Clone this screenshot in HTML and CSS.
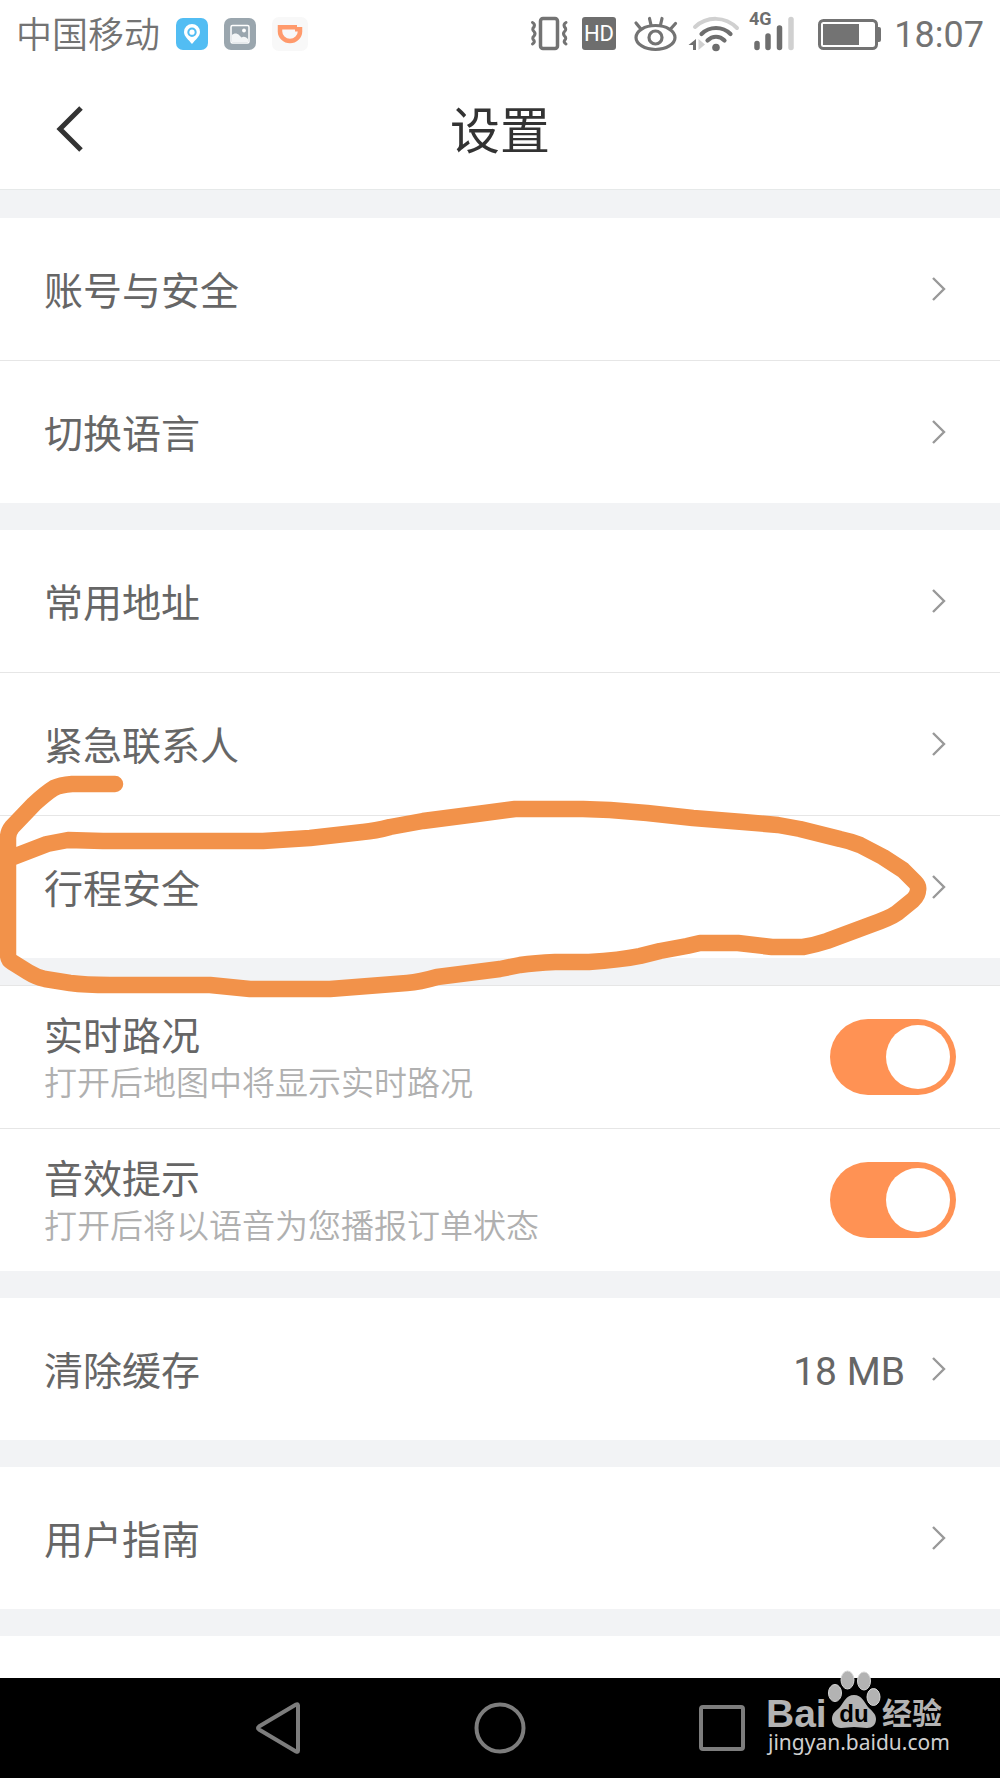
FILE: index.html
```html
<!DOCTYPE html>
<html lang="zh-CN">
<head>
<meta charset="utf-8">
<meta name="viewport" content="width=device-width, initial-scale=1">
<title>设置</title>
<link rel="stylesheet" href="styles.css">
</head>
<body>
<svg class="defs" aria-hidden="true">
  <symbol id="chevron" viewBox="0 0 16 26"><path d="M2 2 13 13 2 24" fill="none" stroke="#999" stroke-width="2.4"/></symbol>
</svg>

<div class="status">
  <span class="carrier">中国移动</span>
  <svg class="app" width="32" height="32" viewBox="0 0 32 32" aria-hidden="true">
    <rect width="32" height="32" rx="7" fill="#52bdf3"/>
    <path fill="#fff" fill-rule="evenodd" d="M16 6a8 8 0 0 1 8 8c0 4.500-4.500 7.500-8 12-3.500-4.500-8-7.500-8-12a8 8 0 0 1 8-8zm0 3.500a4.700 4.700 0 1 0 0 9.400 4.700 4.700 0 0 0 0-9.400z"/>
    <circle cx="16" cy="14.200" r="2.600" fill="#fff"/>
  </svg>
  <svg class="app" width="32" height="32" viewBox="0 0 32 32" aria-hidden="true">
    <rect width="32" height="32" rx="7" fill="#9aa6ae"/>
    <rect x="7" y="7.500" width="18" height="17.500" rx="1.500" fill="none" stroke="#fff" stroke-width="1.500"/>
    <path fill="#f3f5f6" d="M8 17c2-2 5-2 7 0l2.500 2.500c2-1.500 4-1 6.500 1.500v3H8z"/>
    <circle cx="20" cy="12.500" r="1.900" fill="#fff"/>
  </svg>
  <svg class="app" width="36" height="34" viewBox="0 0 36 34" aria-hidden="true">
    <rect width="36" height="34" rx="7" fill="#f8f8f8"/>
    <path d="M25 10.300H8V14.500c0 5 4.500 9.500 10 9.500s10-4.500 10-9.500V12.300H23" fill="none" stroke="#ff9a6c" stroke-width="4.500"/>
  </svg>
  <span class="spacer"></span>
  <svg width="44" height="44" viewBox="530 12 44 44" aria-hidden="true">
    <g fill="none" stroke="#737373" stroke-linecap="round">
      <rect x="540.500" y="18.500" width="17" height="30" rx="2.500" stroke-width="3.500"/>
      <path stroke-width="3" d="M532.500 22.500q3 1.500 1.500 4.500-2.500 2 0 4.500 2 2 0 4.500-2.500 2 0 4.500 1 2-1.500 3.500M566 22.500q-3 1.500-1.500 4.500 2.500 2 0 4.500-2 2 0 4.500 2.500 2 0 4.500-1 2 1.500 3.500"/>
    </g>
  </svg>
  <svg width="40" height="44" viewBox="582 12 40 44" aria-label="HD">
    <rect x="582" y="17" width="34" height="33" rx="3" fill="#6e6e6e"/>
    <text class="hd" x="599" y="41" text-anchor="middle">HD</text>
  </svg>
  <svg width="50" height="44" viewBox="630 12 50 44" aria-hidden="true">
    <g fill="none" stroke="#737373" stroke-width="3.200" stroke-linecap="round">
      <ellipse cx="655.500" cy="37.500" rx="19.500" ry="12"/>
      <circle cx="655.500" cy="37.500" r="6.500"/>
      <path d="M640.500 28.500 636 23M651 25l-1.500-6.500M660.500 25l1.500-6.500M671 28.500l4.500-5"/>
    </g>
  </svg>
  <svg width="52" height="44" viewBox="688 12 52 44" aria-hidden="true">
    <g fill="none" stroke-linecap="round">
      <path stroke="#d0d0d0" stroke-width="4" d="M695 27c12-11 30-11 42 1"/>
      <path stroke="#6e6e6e" stroke-width="4.200" d="M701.500 34c8-8 21-8 29 0M707.500 40.500c5-5 12-5 17 0"/>
    </g>
    <circle cx="716" cy="47.500" r="3.800" fill="#6e6e6e"/>
    <path fill="#6e6e6e" d="M696 39v11h-3v-5h-4.500z"/>
    <path fill="#d0d0d0" d="M698.500 39v11l6.500-5.500z"/>
  </svg>
  <svg width="54" height="60" viewBox="748 4 54 60" aria-label="4G">
    <text class="net" x="749" y="25">4G</text>
    <g stroke-width="5.500" stroke-linecap="round" stroke="#6e6e6e">
      <path d="M757 43.500v4M768 36v11.500M779.500 28v19.500"/>
      <path stroke="#d0d0d0" d="M791 19.500v28"/>
    </g>
  </svg>
  <svg width="76" height="44" viewBox="810 12 76 44" aria-hidden="true">
    <rect x="819.500" y="20.500" width="57" height="28" rx="4" fill="none" stroke="#737373" stroke-width="3"/>
    <rect x="823" y="24" width="36" height="21" fill="#737373"/>
    <path fill="#737373" d="M877 27h2q2 0 2 2v11q0 2-2 2h-2z"/>
  </svg>
  <time class="clock">18:07</time>
</div>

<header class="header">
  <button class="back" type="button" aria-label="返回">
    <svg width="28" height="48" viewBox="0 0 28 48" aria-hidden="true"><path d="M25 3 4 24 25 45" fill="none" stroke="#333" stroke-width="5"/></svg>
  </button>
  <h1 class="title">设置</h1>
</header>

<main class="main">
  <ul class="group">
    <li><a class="row" href="#account"><span class="label">账号与安全</span><svg class="chevron"><use href="#chevron"/></svg></a></li>
    <li><a class="row" href="#language"><span class="label">切换语言</span><svg class="chevron"><use href="#chevron"/></svg></a></li>
  </ul>

  <div class="marked">
    <ul class="group">
      <li><a class="row" href="#address"><span class="label">常用地址</span><svg class="chevron"><use href="#chevron"/></svg></a></li>
      <li><a class="row" href="#contacts"><span class="label">紧急联系人</span><svg class="chevron"><use href="#chevron"/></svg></a></li>
      <li><a class="row" href="#trip"><span class="label">行程安全</span><svg class="chevron"><use href="#chevron"/></svg></a></li>
    </ul>
    <svg class="mark" viewBox="0 530 1000 470" aria-hidden="true">
      <path fill="none" stroke="#f2924a" stroke-width="16.500" stroke-linecap="round" stroke-linejoin="round" d="M115 784H72Q60 785 54 788Q46 793 34 804L12 827Q8 832 8 838V954Q8 960 12 962L28 972Q36 977 45 979L70 983Q85 985 110 985H210L250 989H290L330 989 407 983Q420 982 437 977L500 969 520 965Q535 963 555 962H589Q620 960 640 956L660 951 687 946 700 943H738L772 947H803Q815 945 827 941L870 925Q890 918 897 913L913 900Q918 895 918 890Q919 886 915 882L903 870 883 857 860 845Q850 841 840 839L800 829 778 825 743 822 693 818 647 813 610 810 583 809H515L477 814 423 821 390 827Q375 831 363 832L310 838 263 841H103L68 840 47 844 8 859"/>
    </svg>
  </div>

  <ul class="group ruled">
    <li>
      <label class="row" for="traffic">
        <span class="text"><span class="name">实时路况</span><span class="hint">打开后地图中将显示实时路况</span></span>
        <input class="switch" id="traffic" type="checkbox" role="switch" checked>
      </label>
    </li>
    <li>
      <label class="row" for="sound">
        <span class="text"><span class="name">音效提示</span><span class="hint">打开后将以语音为您播报订单状态</span></span>
        <input class="switch" id="sound" type="checkbox" role="switch" checked>
      </label>
    </li>
  </ul>

  <ul class="group">
    <li><a class="row" href="#cache"><span class="label">清除缓存</span><span class="value">18 MB</span><svg class="chevron"><use href="#chevron"/></svg></a></li>
  </ul>

  <ul class="group">
    <li><a class="row" href="#guide"><span class="label">用户指南</span><svg class="chevron"><use href="#chevron"/></svg></a></li>
  </ul>

  <div class="rest"></div>
</main>

<nav class="navbar">
  <button class="key" type="button" aria-label="返回键">
    <svg width="56" height="56" viewBox="0 0 56 56"><path d="M48 5.500v45q0 2-2 1L9 29.500q-2-1.500 0-3L46 4.500q2-1 2 1z"/></svg>
  </button>
  <button class="key" type="button" aria-label="主屏幕">
    <svg width="56" height="56" viewBox="0 0 56 56"><circle cx="28" cy="28" r="23.500"/></svg>
  </button>
  <button class="key" type="button" aria-label="最近任务">
    <svg width="56" height="56" viewBox="0 0 56 56"><rect x="7" y="7" width="42" height="42" rx="2"/></svg>
  </button>
  <div class="watermark">
    <svg width="200" height="100" viewBox="764 1664 200 100" role="img" aria-label="Baidu 经验 jingyan.baidu.com">
      <g fill="#b3b3b3">
        <text class="brand" x="766" y="1727">Bai</text>
        <g stroke="#d6d6d6" stroke-width="1">
          <ellipse cx="835" cy="1693" rx="6.500" ry="8.500"/>
          <ellipse cx="847.500" cy="1680" rx="6.500" ry="9"/>
          <ellipse cx="864" cy="1681" rx="6.500" ry="9"/>
          <ellipse cx="873.500" cy="1697" rx="6.500" ry="8.500"/>
        </g>
        <path d="M854 1695c8 0 10 7 14 12 4 4 8 7 8 12 0 6-4 9-9 9-5 0-8-1-13-1s-8 1-13 1c-5 0-9-4-9-9 0-6 4-8 8-12 4-5 6-12 14-12z"/>
        <text class="cn" x="882" y="1724">经验</text>
      </g>
      <text class="du" x="854" y="1722" text-anchor="middle">du</text>
      <text class="url" x="768" y="1750">jingyan.baidu.com</text>
    </svg>
  </div>
</nav>
</body>
</html>
```

FILE: styles.css
```css
* {
  box-sizing: border-box;
}

body {
  margin: 0;
  min-height: 100vh;
  display: flex;
  flex-direction: column;
  background: #fff;
  color: #666;
  font-family: Roboto, "Noto Sans CJK SC", sans-serif;
}

.defs {
  display: none;
}

svg {
  display: block;
  flex: none;
}

button {
  padding: 0;
  border: 0;
  background: none;
}

/* Status bar */
.status {
  display: flex;
  align-items: center;
  gap: 8px;
  height: 68px;
  padding: 0 16px;
  color: #737373;
  font-size: 36px;
  line-height: 44px;
}

.carrier {
  padding-top: 4px;
  font-weight: 350;
}

.clock {
  padding-top: 2px;
}

.app {
  margin-left: 8px;
}

.spacer {
  flex: 1;
}

.hd {
  font-size: 22px;
  fill: #fff;
}

.net {
  font-size: 18px;
  font-weight: 700;
  fill: #6e6e6e;
}

/* Title bar */
.header {
  display: grid;
  grid-template-columns: 1fr auto 1fr;
  align-items: center;
  height: 122px;
  padding: 0 56px;
  border-bottom: 1px solid #e6e9e9;
}

.back {
  justify-self: start;
}

.title {
  margin: 0;
  padding-top: 6px;
  color: #333;
  font-size: 50px;
  font-weight: 400;
  line-height: 64px;
}

/* Setting groups */
.main {
  flex: 1;
  display: flex;
  flex-direction: column;
  gap: 27px;
  padding-top: 28px;
  background: #f2f3f5;
}

.group {
  margin: 0;
  padding: 0;
  list-style: none;
  background: #fff;
}

.group li + li,
.ruled {
  border-top: 1px solid #e6e6e6;
}

.row {
  display: flex;
  align-items: center;
  min-height: 142px;
  padding: 0 44px;
  color: #666;
  text-decoration: none;
}

.label,
.value,
.name {
  font-size: 39px;
  line-height: 48px;
}

.label,
.value,
.text {
  padding-top: 6px;
}

.label,
.text {
  flex: 1;
}

.value {
  margin-right: 26px;
}

.chevron {
  width: 16px;
  height: 26px;
  margin-right: 9px;
}

.text {
  display: flex;
  flex-direction: column;
}

.hint {
  color: #b0b0b0;
  font-size: 33px;
  font-weight: 350;
  line-height: 46px;
}

.switch {
  appearance: none;
  display: flex;
  align-items: center;
  width: 126px;
  height: 76px;
  margin: 0;
  padding: 6px;
  border-radius: 38px;
  background: #ccc;
}

.switch::before {
  content: "";
  width: 64px;
  height: 64px;
  border-radius: 50%;
  background: #fff;
}

.switch:checked {
  justify-content: flex-end;
  background: #ff9254;
}

.rest {
  flex: 1;
  min-height: 41px;
  background: #fff;
}

/* Hand-drawn loop over the highlighted row */
.marked {
  position: relative;
}

.mark {
  position: absolute;
  top: 0;
  left: 0;
  width: 100%;
  pointer-events: none;
}

/* System navigation */
.navbar {
  position: relative;
  display: flex;
  justify-content: center;
  align-items: center;
  gap: 166px;
  height: 100px;
  background: #000;
}

.key svg {
  fill: none;
  stroke: #7d7d7d;
  stroke-width: 4px;
}

.watermark {
  position: absolute;
  right: 36px;
  bottom: 14px;
}

.brand {
  font: 700 39px "Liberation Sans", sans-serif;
}

.cn {
  font: 700 30px "Noto Sans CJK SC", sans-serif;
}

.du {
  font: 700 24px "Liberation Sans", sans-serif;
  fill: #000;
}

.url {
  font: 400 21px "Noto Sans", sans-serif;
  fill: #d0d0d0;
}
```
